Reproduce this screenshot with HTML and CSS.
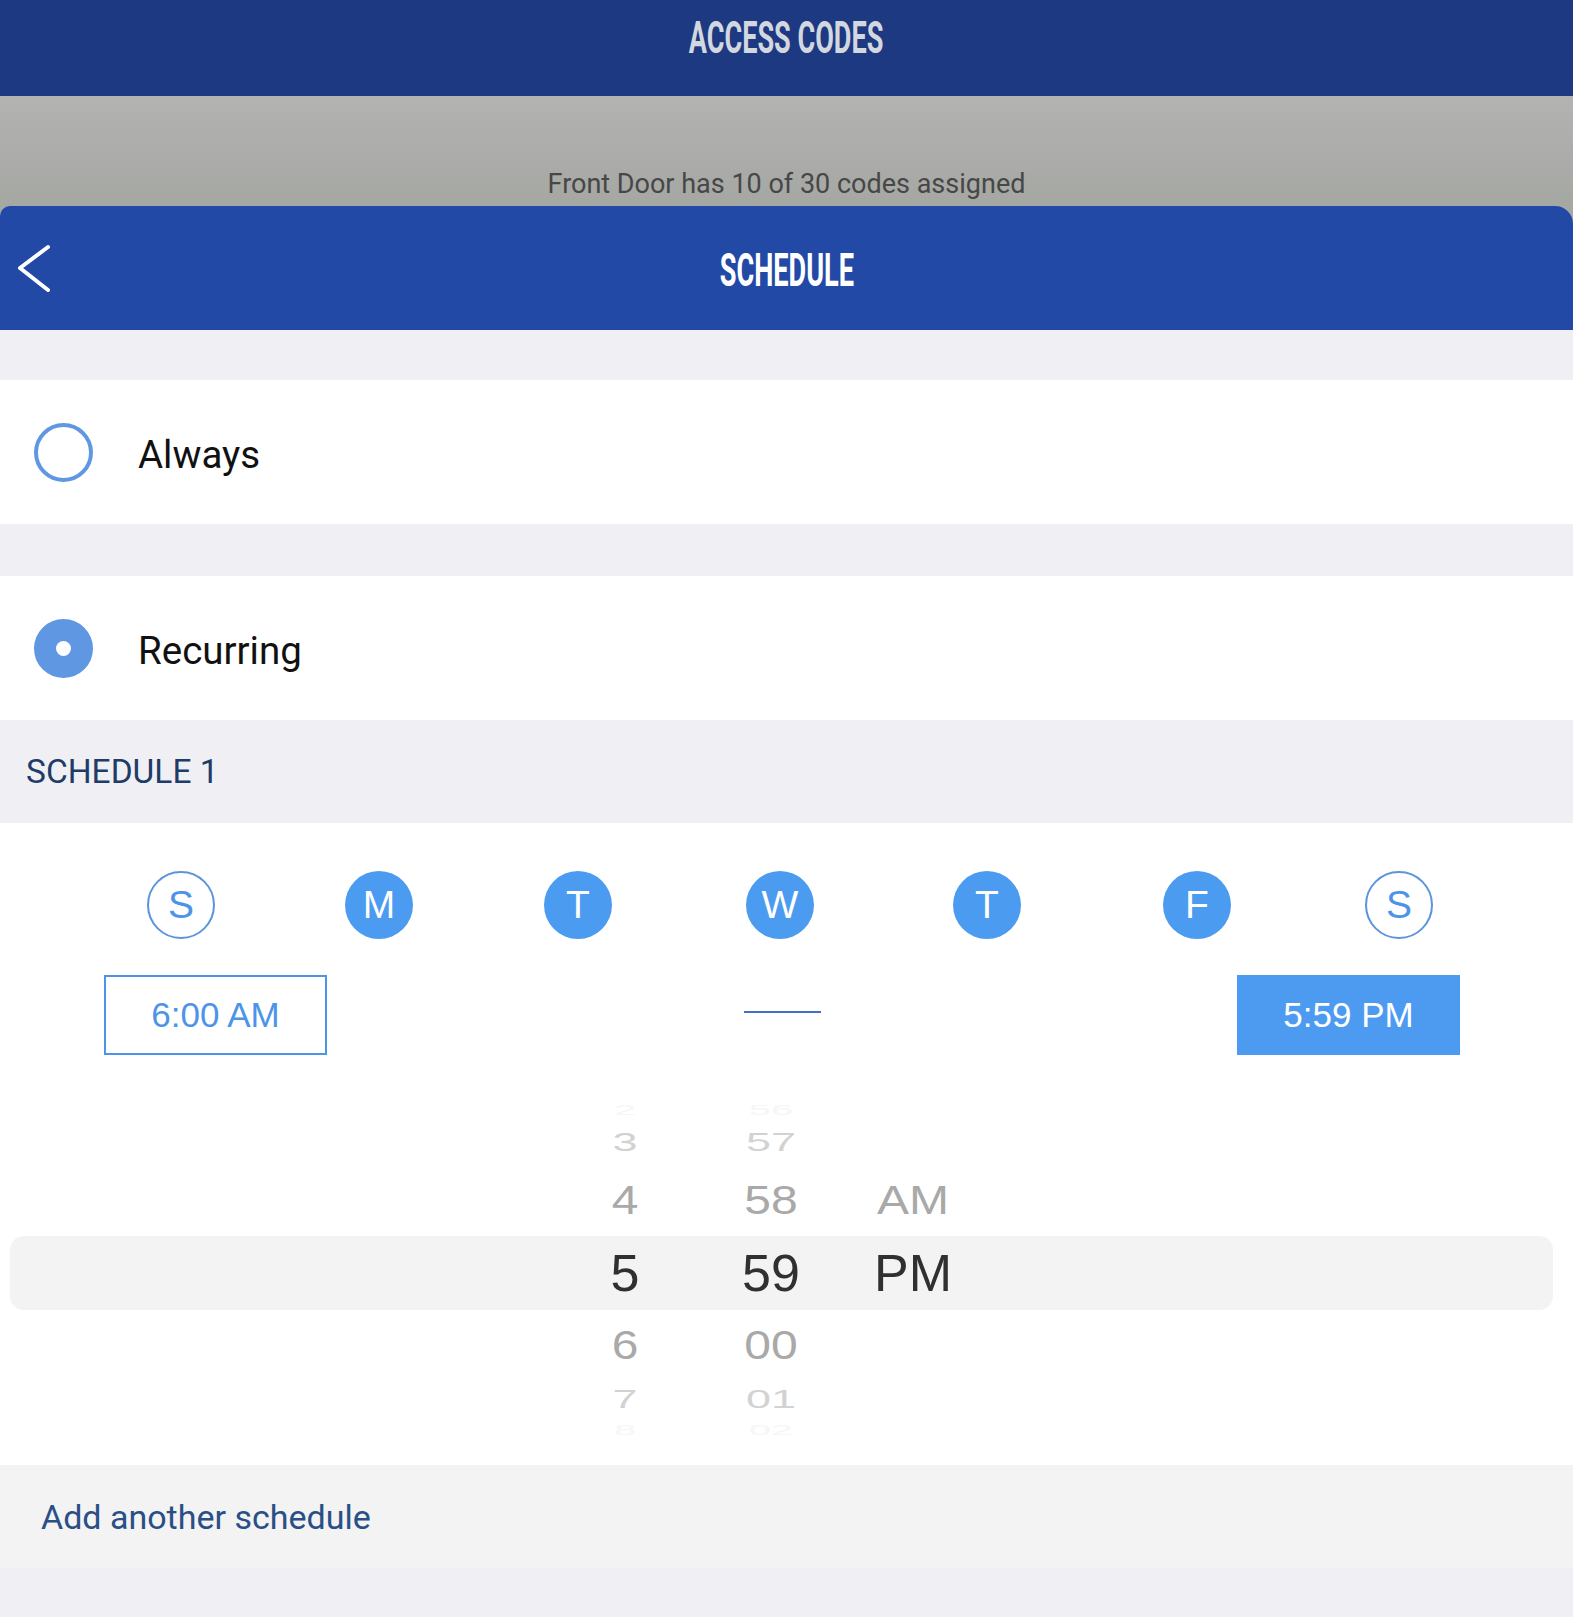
FILE: index.html
```html
<!DOCTYPE html>
<html lang="en">
<head>
    <meta charset="UTF-8">
    <meta name="viewport" content="width=device-width, initial-scale=1.0">
    <title>Access Codes - Schedule</title>
    <link rel="stylesheet" href="styles.css">
</head>
<body>

    <div class="topbar">
        <h1 class="app-title"><span>ACCESS CODES</span></h1>
    </div>

    <div class="backdrop">
        <div class="summary">
            <p>Front Door has 10 of 30 codes assigned</p>
        </div>
        <div class="sheet-header">
            <button class="back-btn" aria-label="Back">
                <svg width="50" height="60" viewBox="0 0 50 60">
                    <polyline points="48,9 20,30 48,52" fill="none" stroke="#fff" stroke-width="4" stroke-linecap="round" stroke-linejoin="round"/>
                </svg>
            </button>
            <h2 class="sheet-title"><span>SCHEDULE</span></h2>
        </div>
    </div>

    <div class="gap"></div>
    <div class="option-row">
        <span class="radio"></span>
        <span class="option-label">Always</span>
    </div>
    <div class="gap gap-wide"></div>
    <div class="option-row">
        <span class="radio checked"></span>
        <span class="option-label">Recurring</span>
    </div>

    <div class="section-title">SCHEDULE 1</div>

    <div class="schedule-body">
        <div class="days">
            <span class="day off">S</span>
            <span class="day">M</span>
            <span class="day">T</span>
            <span class="day">W</span>
            <span class="day">T</span>
            <span class="day">F</span>
            <span class="day off">S</span>
        </div>

        <div class="times">
            <div class="time-box">6:00 AM</div>
            <div class="dash"></div>
            <div class="time-box active">5:59 PM</div>
        </div>

        <div class="picker">
            <div class="band"></div>
            <div class="wheel">
                <span class="cell up3"><span>2</span></span>
                <span class="cell up2"><span>3</span></span>
                <span class="cell up1"><span>4</span></span>
                <span class="cell current"><span>5</span></span>
                <span class="cell down1"><span>6</span></span>
                <span class="cell down2"><span>7</span></span>
                <span class="cell down3"><span>8</span></span>
            </div>
            <div class="wheel">
                <span class="cell up3"><span>56</span></span>
                <span class="cell up2"><span>57</span></span>
                <span class="cell up1"><span>58</span></span>
                <span class="cell current"><span>59</span></span>
                <span class="cell down1"><span>00</span></span>
                <span class="cell down2"><span>01</span></span>
                <span class="cell down3"><span>02</span></span>
            </div>
            <div class="wheel">
                <span class="cell up3"></span>
                <span class="cell up2"></span>
                <span class="cell up1"><span>AM</span></span>
                <span class="cell current"><span>PM</span></span>
                <span class="cell down1"></span>
                <span class="cell down2"></span>
                <span class="cell down3"></span>
            </div>
        </div>
    </div>

    <div class="add-row">Add another schedule</div>

</body>
</html>
```

FILE: styles.css
```css
body {
    margin: 0;
    background-color: #efeff4;
    font-family: Roboto, 'Liberation Sans', sans-serif;
}
.topbar {
    height: 96px;
    background-color: #1c3981;
    text-align: center;
}
.app-title {
    margin: 0;
    font-size: 44px;
    line-height: 76px;
    font-weight: 700;
    color: #d3d7df;
}
.app-title span {
    display: inline-block;
    transform: scaleX(0.615);
}
.backdrop {
    background-color: #a6a8a4;
}
.summary {
    height: 110px;
    background: linear-gradient(#b3b3b1, #a5a7a3);
    display: flex;
    align-items: flex-end;
    justify-content: center;
}
.summary p {
    margin: 0 0 6px;
    font-size: 27px;
    line-height: 32px;
    color: #474747;
}
.sheet-header {
    height: 120px;
    padding-top: 4px;
    background-color: #2249a6;
    border-radius: 10px 18px 0 0;
    display: grid;
    grid-template-columns: 1fr auto 1fr;
    align-items: center;
}
.back-btn {
    justify-self: start;
    margin: -4px 0 0;
    padding: 0;
    border: none;
    background: none;
    display: flex;
    cursor: pointer;
}
.sheet-title {
    margin: 0;
    font-size: 46px;
    line-height: 50px;
    font-weight: 700;
    color: #ffffff;
}
.sheet-title span {
    display: inline-block;
    transform: scaleX(0.59);
}
.gap {
    height: 50px;
}
.gap-wide {
    height: 52px;
}
.option-row {
    height: 144px;
    background-color: #ffffff;
    display: flex;
    align-items: center;
    padding-left: 34px;
}
.radio {
    width: 59px;
    height: 59px;
    box-sizing: border-box;
    border: 4px solid #6097e3;
    border-radius: 50%;
    margin-right: 45px;
    display: flex;
    align-items: center;
    justify-content: center;
}
.radio.checked {
    background-color: #6097e3;
}
.radio.checked::after {
    content: '';
    width: 15px;
    height: 15px;
    border-radius: 50%;
    background-color: #ffffff;
}
.option-label {
    font-size: 38.5px;
    color: #111111;
    padding-top: 4px;
}
.section-title {
    height: 103px;
    background-color: #f0f0f4;
    display: flex;
    align-items: center;
    padding-left: 26px;
    font-size: 33.5px;
    color: #1f3b68;
}
.schedule-body {
    background-color: #ffffff;
    padding: 48px 0 25px;
}
.days {
    display: grid;
    grid-template-columns: 198px 199px 202px 207px 210px 202px 68px;
    padding-left: 147px;
}
.day {
    width: 68px;
    height: 68px;
    box-sizing: border-box;
    border-radius: 50%;
    display: flex;
    align-items: center;
    justify-content: center;
    background-color: #4b9bf0;
    color: #ffffff;
    font-family: 'Liberation Sans', sans-serif;
    font-size: 39px;
}
.day.off {
    background-color: #ffffff;
    border: 2px solid #5b95dc;
    color: #4d94e8;
}
.times {
    display: flex;
    justify-content: space-between;
    align-items: center;
    margin-top: 36px;
    padding: 0 113px 0 104px;
}
.time-box {
    width: 223px;
    height: 80px;
    box-sizing: border-box;
    border: 2px solid #4d94e8;
    background-color: #ffffff;
    color: #4d94e8;
    display: flex;
    align-items: center;
    justify-content: center;
    font-family: 'Liberation Sans', sans-serif;
    font-size: 35px;
}
.time-box.active {
    background-color: #4d9bf0;
    border-color: #4d9bf0;
    color: #ffffff;
}
.dash {
    width: 77px;
    height: 2px;
    margin-top: -6px;
    background-color: #3f72c2;
}
.picker {
    position: relative;
    margin-top: 43px;
    height: 342px;
    overflow: hidden;
    display: grid;
    grid-template-columns: 80px 80px 72px;
    column-gap: 66px;
    padding-left: 585px;
}
.band {
    position: absolute;
    left: 10px;
    right: 20px;
    top: 138px;
    height: 74px;
    border-radius: 14px;
    background-color: #f3f3f3;
}
.wheel {
    position: relative;
    display: flex;
    flex-direction: column;
    align-items: center;
    font-family: 'Liberation Sans', sans-serif;
}
.cell {
    display: block;
    white-space: nowrap;
}
.cell span {
    display: inline-block;
}
.current {
    height: 74px;
    line-height: 74px;
    font-size: 52px;
    color: #303030;
}
.up1, .down1 {
    font-size: 48px;
    color: #a9a9a9;
}
.up1 {
    height: 72px;
    line-height: 72px;
}
.down1 {
    height: 70px;
    line-height: 70px;
}
.up1 span, .down1 span {
    transform: scaleY(0.85);
}
.up2, .down2 {
    font-size: 45px;
    color: #d2d2d2;
}
.up2 {
    height: 42px;
    line-height: 42px;
}
.down2 {
    height: 40px;
    line-height: 40px;
}
.up2 span, .down2 span {
    transform: scaleY(0.56);
}
.up3, .down3 {
    font-size: 40px;
    color: #f6f6f6;
    overflow: hidden;
}
.up3 {
    height: 24px;
    line-height: 24px;
}
.down3 {
    height: 20px;
    line-height: 20px;
}
.up3 span, .down3 span {
    transform: scaleY(0.35);
}
.add-row {
    height: 103px;
    background-color: #f3f3f4;
    display: flex;
    align-items: center;
    padding-left: 41px;
    font-size: 34px;
    color: #2a4f86;
}
```
